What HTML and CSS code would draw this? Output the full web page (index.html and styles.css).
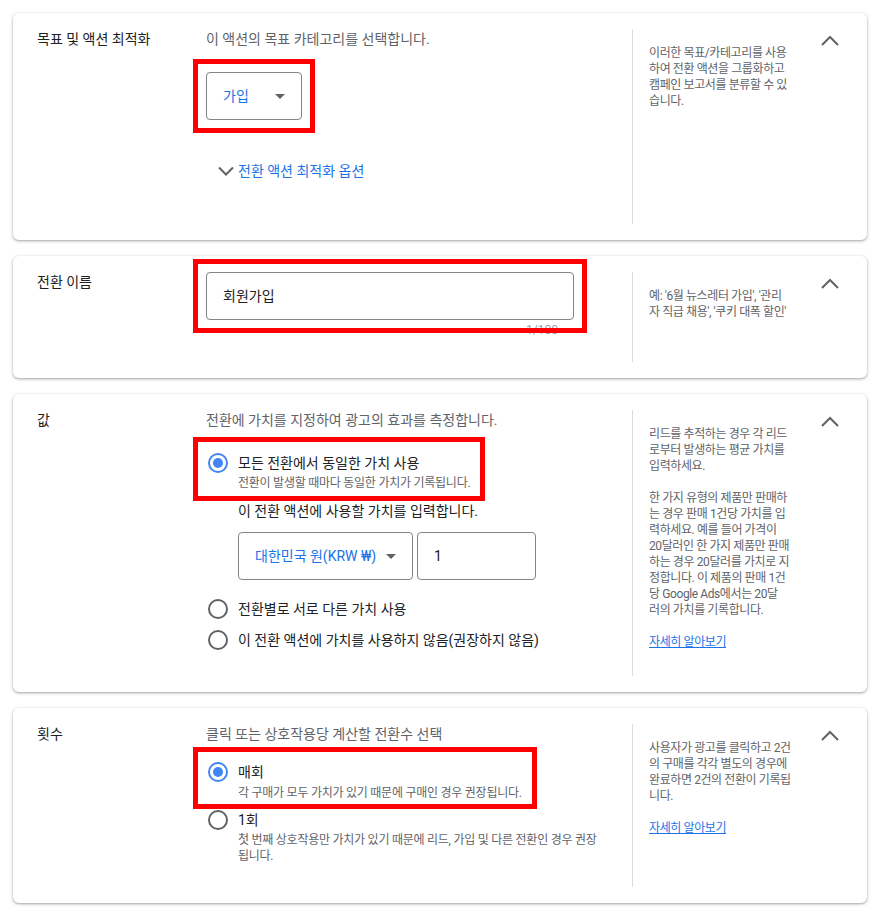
FILE: index.html
```html
<!DOCTYPE html>
<html lang="ko">
<head>
	<meta charset="utf-8">
	<title>전환 액션 설정</title>
	<link rel="stylesheet" href="styles.css">
</head>
<body>
	<div class="page">
		<!-- 목표 -->
		<section class="card card-goal">
			<div class="label">목표 및 액션 최적화</div>
			<div class="main">
				<div class="desc">이 액션의 목표 카테고리를 선택합니다.</div>
				<div class="pick">
					<span class="mark">
						<span class="select select-goal">
							<span class="select-text">가입</span>
							<span class="caret"></span>
						</span>
					</span>
				</div>
				<a href="javascript:;" class="more">
					<svg width="24" height="24" viewBox="0 0 24 24"><polyline points="5,8.5 12,15.5 19,8.5" fill="none" stroke="#5f6368" stroke-width="2"/></svg>
					<span>전환 액션 최적화 옵션</span>
				</a>
			</div>
			<div class="side">
				<p>이러한 목표/카테고리를 사용<br>하여 전환 액션을 그룹화하고<br>캠페인 보고서를 분류할 수 있<br>습니다.</p>
			</div>
			<a href="javascript:;" class="toggle"><svg width="24" height="24" viewBox="0 0 24 24"><polyline points="4,16 12,8 20,16" fill="none" stroke="#5f6368" stroke-width="2"/></svg></a>
		</section>

		<!-- 전환 이름 -->
		<section class="card card-name">
			<div class="label">전환 이름</div>
			<div class="main">
				<span class="mark">
					<span class="field field-name">회원가입</span>
				</span>
				<div class="counter">1/100</div>
			</div>
			<div class="side">
				<p>예: '6월 뉴스레터 가입', '관리<br>자 직급 채용', '쿠키 대폭 할인'</p>
			</div>
			<a href="javascript:;" class="toggle"><svg width="24" height="24" viewBox="0 0 24 24"><polyline points="4,16 12,8 20,16" fill="none" stroke="#5f6368" stroke-width="2"/></svg></a>
		</section>

		<!-- 값 -->
		<section class="card card-value">
			<div class="label">값</div>
			<div class="main">
				<div class="desc">전환에 가치를 지정하여 광고의 효과를 측정합니다.</div>
				<div class="radios">
					<div class="mark mark-radio">
						<label class="radio on">
							<span class="radio-dot"></span>
							<span class="radio-body">
								<span class="radio-title">모든 전환에서 동일한 가치 사용</span>
								<span class="radio-sub">전환이 발생할 때마다 동일한 가치가 기록됩니다.</span>
							</span>
						</label>
					</div>
					<div class="value-box">
						<div class="value-title">이 전환 액션에 사용할 가치를 입력합니다.</div>
						<div class="value-row">
							<span class="select select-currency">
								<span class="select-text">대한민국 원(KRW ₩)</span>
								<span class="caret"></span>
							</span>
							<span class="field field-amount">1</span>
						</div>
					</div>
					<label class="radio radio-gap">
						<span class="radio-dot"></span>
						<span class="radio-body">
							<span class="radio-title">전환별로 서로 다른 가치 사용</span>
						</span>
					</label>
					<label class="radio radio-next">
						<span class="radio-dot"></span>
						<span class="radio-body">
							<span class="radio-title">이 전환 액션에 가치를 사용하지 않음(권장하지 않음)</span>
						</span>
					</label>
				</div>
			</div>
			<div class="side">
				<p>리드를 추적하는 경우 각 리드<br>로부터 발생하는 평균 가치를<br>입력하세요.</p>
				<p>한 가지 유형의 제품만 판매하<br>는 경우 판매 1건당 가치를 입<br>력하세요. 예를 들어 가격이<br>20달러인 한 가지 제품만 판매<br>하는 경우 20달러를 가치로 지<br>정합니다. 이 제품의 판매 1건<br>당 Google Ads에서는 20달<br>러의 가치를 기록합니다.</p>
				<a href="javascript:;" class="learn">자세히 알아보기</a>
			</div>
			<a href="javascript:;" class="toggle"><svg width="24" height="24" viewBox="0 0 24 24"><polyline points="4,16 12,8 20,16" fill="none" stroke="#5f6368" stroke-width="2"/></svg></a>
		</section>

		<!-- 횟수 -->
		<section class="card card-count">
			<div class="label">횟수</div>
			<div class="main">
				<div class="desc">클릭 또는 상호작용당 계산할 전환수 선택</div>
				<div class="radios">
					<div class="mark mark-radio mark-count">
						<label class="radio on">
							<span class="radio-dot"></span>
							<span class="radio-body">
								<span class="radio-title">매회</span>
								<span class="radio-sub">각 구매가 모두 가치가 있기 때문에 구매인 경우 권장됩니다.</span>
							</span>
						</label>
					</div>
					<label class="radio radio-once">
						<span class="radio-dot"></span>
						<span class="radio-body">
							<span class="radio-title">1회</span>
							<span class="radio-sub">첫 번째 상호작용만 가치가 있기 때문에 리드, 가입 및 다른 전환인 경우 권장<br>됩니다.</span>
						</span>
					</label>
				</div>
			</div>
			<div class="side">
				<p>사용자가 광고를 클릭하고 2건<br>의 구매를 각각 별도의 경우에<br>완료하면 2건의 전환이 기록됩<br>니다.</p>
				<a href="javascript:;" class="learn">자세히 알아보기</a>
			</div>
			<a href="javascript:;" class="toggle"><svg width="24" height="24" viewBox="0 0 24 24"><polyline points="4,16 12,8 20,16" fill="none" stroke="#5f6368" stroke-width="2"/></svg></a>
		</section>
	</div>
</body>
</html>
```

FILE: styles.css
```css
* {
	margin: 0;
	padding: 0;
	box-sizing: border-box;
}
body {
	font-family: Roboto, "Noto Sans CJK KR", sans-serif;
	font-size: 14px;
	line-height: 20px;
	color: #202124;
	background: #fff;
}
a {
	text-decoration: none;
}
.page {
	display: flex;
	flex-direction: column;
	gap: 16px;
	padding: 13px;
}
.card {
	display: flex;
	padding: 16px 25px 16px 24px;
	background: #fff;
	border-radius: 6px;
	box-shadow: 0 1px 2px rgba(60, 64, 67, .3), 0 1px 3px 1px rgba(60, 64, 67, .15);
}
.label {
	flex: none;
	width: 169px;
}
.main {
	flex: none;
	width: 402px;
	margin-right: 24px;
	padding-bottom: 24px;
}
.side {
	flex: none;
	width: 162px;
	padding: 16px 0 0 16px;
	border-left: 1px solid #dadce0;
	font-size: 12px;
	line-height: 16px;
	letter-spacing: -0.4px;
	color: #5f6368;
}
.side p {
	margin-bottom: 16px;
	white-space: nowrap;
}
.learn {
	color: #1a73e8;
	text-decoration: underline;
}
.toggle {
	flex: none;
	display: block;
	width: 24px;
	height: 24px;
	margin-left: 24px;
}
.toggle svg {
	display: block;
}
.desc {
	color: #5f6368;
}

/* 빨간 표시 상자 */
.mark {
	display: inline-block;
	position: relative;
	z-index: 1;
	border: 5px solid #f00;
	padding: 8px;
	margin: -13px;
	vertical-align: top;
}
.mark-radio {
	display: block;
	width: fit-content;
	padding: 11px 10px 5px 8px;
	margin: -16px 0 -10px -13px;
}
.mark-count {
	padding: 10px 10px 3px 8px;
	margin: -15px 0 -8px -13px;
}

/* 선택 상자 */
.select {
	display: flex;
	align-items: center;
	justify-content: space-between;
	height: 48px;
	padding: 0 16px;
	border: 1px solid #80868b;
	border-radius: 4px;
	color: #1a73e8;
	background: #fff;
}
.select-goal {
	width: 96px;
}
.select-currency {
	width: 175px;
}
.caret {
	width: 0;
	height: 0;
	border-left: 5px solid transparent;
	border-right: 5px solid transparent;
	border-top: 5px solid #5f6368;
}
.pick {
	display: flow-root;
	height: 48px;
	margin-top: 23px;
}
.pick .mark {
	display: block;
	width: fit-content;
}
.more {
	display: flex;
	align-items: center;
	margin: 39px 0 0 8px;
	color: #1a73e8;
}
.more svg {
	display: block;
}
.card-goal .main {
	padding-bottom: 41px;
}

/* 입력란 */
.field {
	display: flex;
	align-items: center;
	height: 48px;
	padding: 0 16px;
	border: 1px solid #80868b;
	border-radius: 4px;
	background: #fff;
}
.field-name {
	width: 368px;
}
.field-amount {
	width: 119px;
}
.card-name .mark {
	display: block;
	width: fit-content;
}
.counter {
	width: 368px;
	margin-top: 2px;
	padding-right: 16px;
	text-align: right;
	font-size: 12px;
	line-height: 16px;
	color: #9aa0a6;
}
.card-name .main {
	padding-bottom: 24px;
}

/* 라디오 */
.radios {
	margin-top: 23px;
}
.card-count .radios {
	margin-top: 18px;
}
.radio {
	display: flex;
	gap: 10px;
	margin-left: 2px;
}
.radio-dot {
	flex: none;
	display: flex;
	align-items: center;
	justify-content: center;
	width: 20px;
	height: 20px;
	border: 2px solid #5f6368;
	border-radius: 50%;
}
.radio.on .radio-dot {
	border-color: #4285f4;
}
.radio.on .radio-dot::after {
	content: "";
	width: 10px;
	height: 10px;
	border-radius: 50%;
	background: #4285f4;
}
.radio-title {
	display: block;
}
.radio-sub {
	display: block;
	margin-top: 2px;
	font-size: 12px;
	line-height: 16px;
	letter-spacing: -0.25px;
	white-space: nowrap;
	color: #5f6368;
}
.mark-count .radio-sub {
	margin-top: 3px;
}
.value-box {
	margin: 10px 0 0 32px;
}
.value-row {
	display: flex;
	gap: 4px;
	margin-top: 11px;
}
.radio-gap {
	margin-top: 19px;
}
.radio-next {
	margin-top: 11px;
}
.card-value .main {
	padding-bottom: 26px;
}
.radio-once {
	margin-top: 9px;
}
.card-count .main {
	padding-bottom: 23px;
}
```
